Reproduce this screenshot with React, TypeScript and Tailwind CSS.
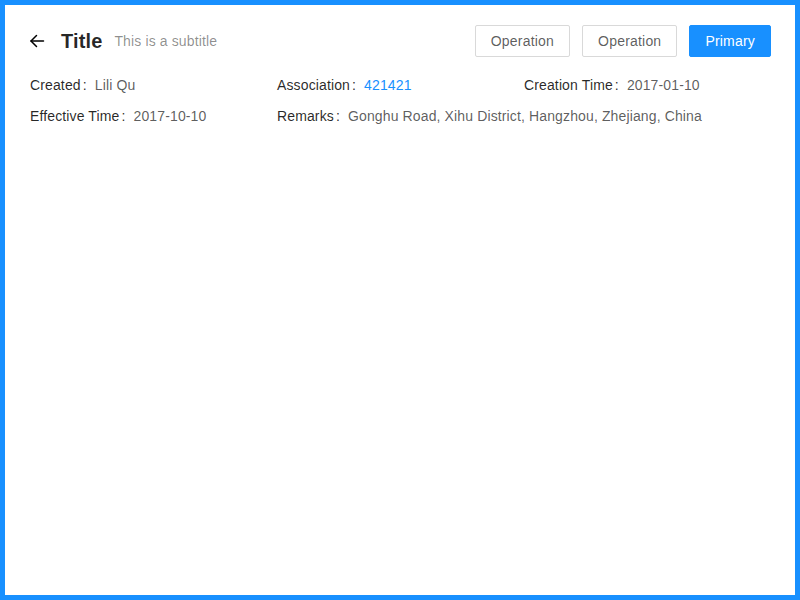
import React from "react";

function Item({ label, children, span = 1 }: { label: string; children: React.ReactNode; span?: number }) {
  return (
    <div className={`flex items-baseline pb-[9px] ${span === 2 ? "col-span-2" : ""}`}>
      <span className="text-[rgba(0,0,0,0.85)]">{label}</span>
      <span className="text-[rgba(0,0,0,0.85)] ml-[2px] mr-[8px]">:</span>
      <span className="text-[rgba(0,0,0,0.65)]">{children}</span>
    </div>
  );
}

export default function App() {
  return (
    <div
      className="w-[800px] h-[600px] border-[5px] border-[#1890ff] bg-white text-[14px] leading-[22px] tracking-[0.13px]"
      style={{ fontFamily: '"Liberation Sans", Arial, sans-serif' }}
    >
      <div className="px-[24px] pt-[20px]">
        <div className="flex items-center justify-between h-[32px]">
          <div className="flex items-center">
            <svg width="16" height="16" viewBox="0 0 16 16" className="mr-[16px]" fill="none" stroke="#000" strokeWidth="1.5" strokeLinecap="round" strokeLinejoin="round">
              <path d="M14.5 8H2" />
              <path d="M7.5 2.5L2 8l5.5 5.5" />
            </svg>
            <span className="text-[20px] font-bold leading-[32px] text-[rgba(0,0,0,0.85)]">Title</span>
            <span className="ml-[12px] text-[14px] text-[rgba(0,0,0,0.45)]">This is a subtitle</span>
          </div>
          <div className="flex gap-[12px]">
            <button className="h-[32px] px-[15px] border border-[#d9d9d9] rounded-[2px] text-[rgba(0,0,0,0.65)] bg-white tracking-[0.2px]">Operation</button>
            <button className="h-[32px] px-[15px] border border-[#d9d9d9] rounded-[2px] text-[rgba(0,0,0,0.65)] bg-white tracking-[0.2px]">Operation</button>
            <button className="h-[32px] px-[15px] border border-[#1890ff] rounded-[2px] text-white bg-[#1890ff] tracking-[0.2px]">Primary</button>
          </div>
        </div>
        <div className="grid grid-cols-3 pt-[17px] pl-[1px]">
          <Item label="Created">Lili Qu</Item>
          <Item label="Association">
            <span className="text-[#1890ff]">421421</span>
          </Item>
          <Item label="Creation Time">2017-01-10</Item>
          <Item label="Effective Time">2017-10-10</Item>
          <Item label="Remarks" span={2}>Gonghu Road, Xihu District, Hangzhou, Zhejiang, China</Item>
        </div>
      </div>
    </div>
  );
}
